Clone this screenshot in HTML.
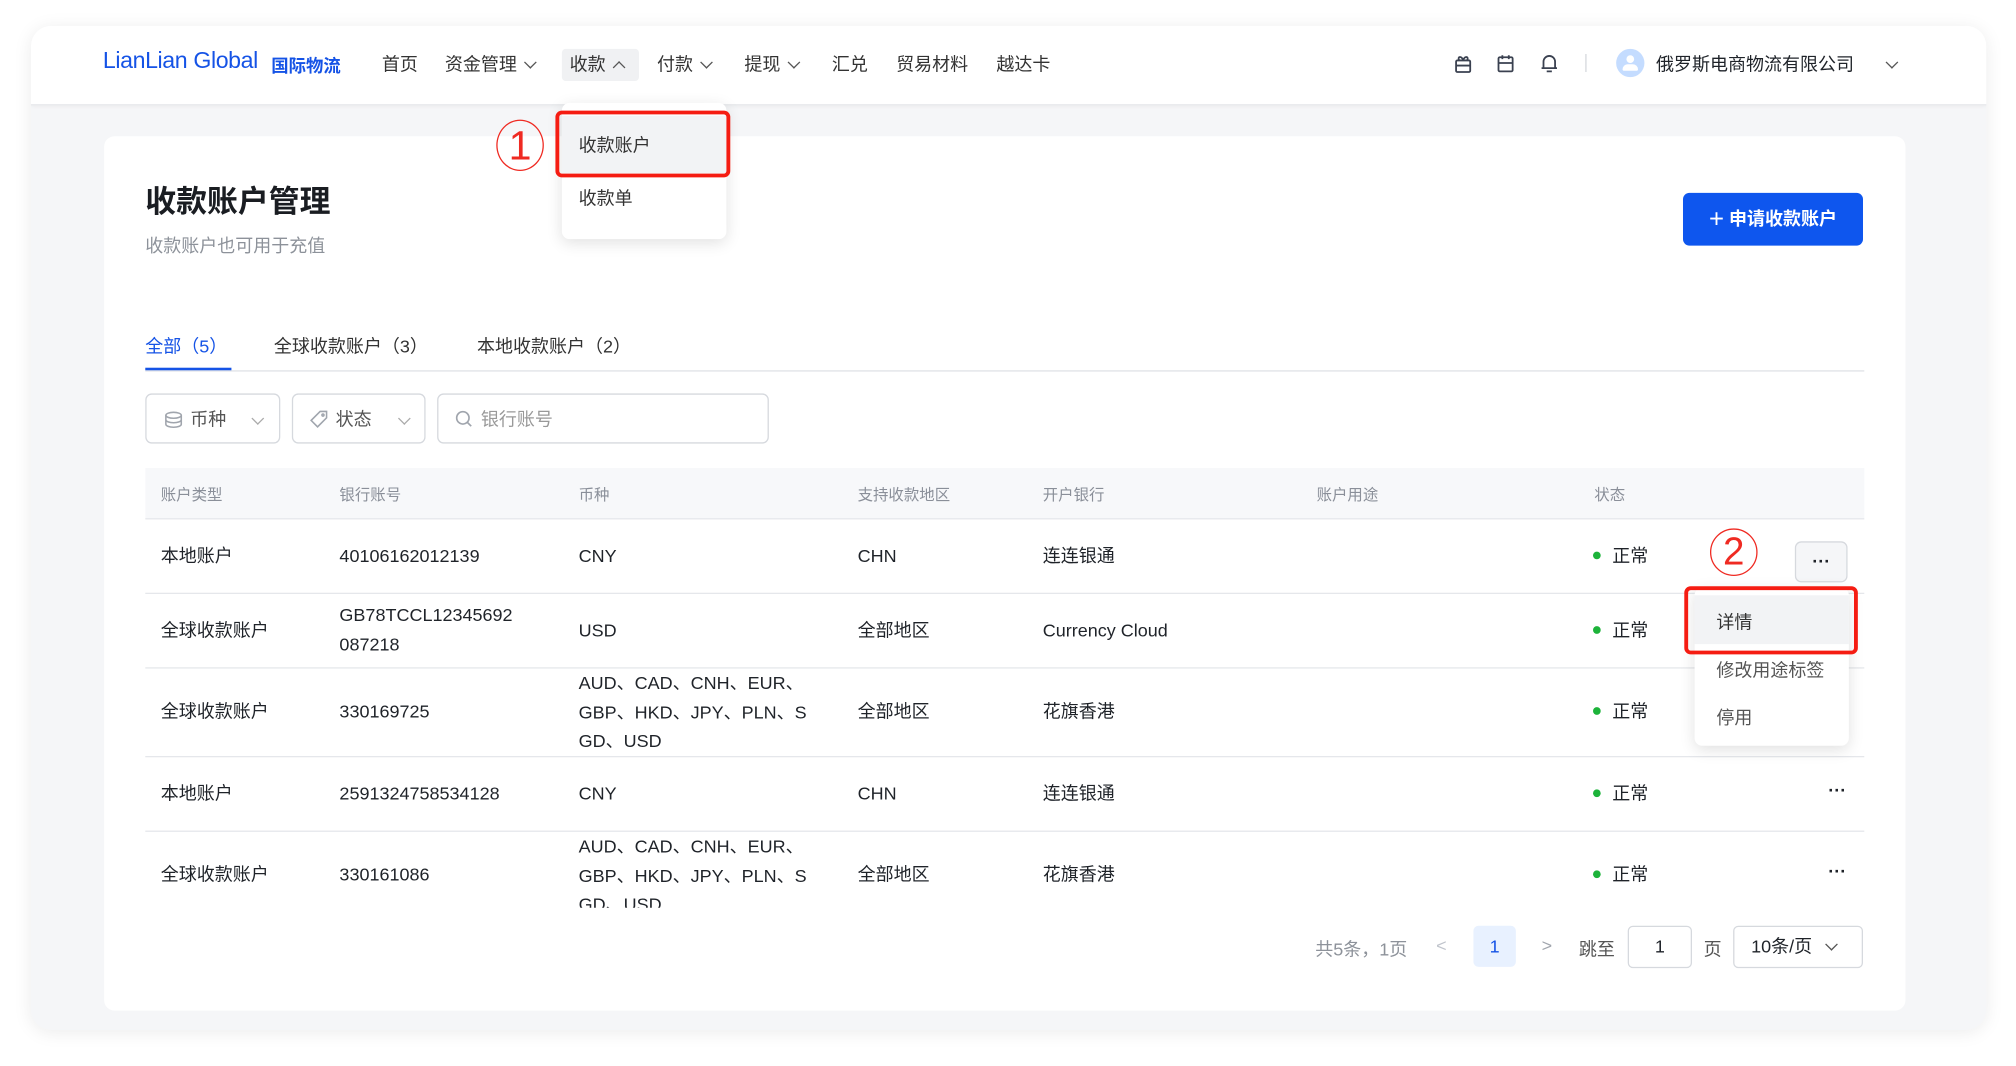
<!DOCTYPE html>
<html><head><meta charset="utf-8">
<style>
html,body{margin:0;padding:0;background:#fff;width:2016px;height:1065px;overflow:hidden}
body{font-family:"Liberation Sans","Noto Sans CJK SC",sans-serif;color:#1f2329}
#w{position:absolute;left:0;top:0;width:1568px;height:829px;transform:scale(1.285714);transform-origin:0 0}
.a{position:absolute;white-space:nowrap}
.win{position:absolute;left:24px;top:20px;width:1521px;height:781px;border-radius:16px;background:#f5f6f8;box-shadow:0 2px 14px rgba(0,0,0,.08);overflow:hidden}
.hdr{position:absolute;left:0;top:0;width:1521px;height:61px;background:#fff;border-bottom:1px solid #e6e8eb;box-shadow:0 1px 3px rgba(0,0,0,.05)}
.nav{font-size:14px;color:#333;top:41px;line-height:18px}
.chev{display:inline-block;width:6px;height:6px;border-right:1.2px solid #555;border-bottom:1.2px solid #555;transform:rotate(45deg);margin-left:7px;position:relative;top:-3px}
.chevu{transform:rotate(-135deg);top:1px}
.card{position:absolute;left:81px;top:106px;width:1401px;height:680px;background:#fff;border-radius:8px}
.f{position:absolute;top:306px;height:39px;border:1px solid #d6d9de;border-radius:5px;box-sizing:border-box;font-size:14px;color:#555;line-height:38px}
.th{font-size:12px;color:#8a8f99;top:376px}
.td{font-size:14px;color:#1f2329;line-height:22.5px}
.line{position:absolute;left:113px;width:1337px;height:1px;background:#e5e7eb}
.dot{position:absolute;width:6px;height:6px;border-radius:50%;background:#1db33a}
.dd{position:absolute;background:#fff;border-radius:6px;box-shadow:0 3px 12px rgba(0,0,0,.12)}
.red{position:absolute;border:3px solid #f51c12;border-radius:5px;box-sizing:border-box}
.circ{position:absolute;border:1.5px solid #ef2a22;border-radius:50%;color:#ef2a22;text-align:center;font-family:"Liberation Sans",sans-serif}
</style></head><body><div id="w">
<div class="win">
 <div class="hdr"></div>
</div>
<div class="a" style="left:80px;top:37px;font-size:18px;color:#1553e6;letter-spacing:-0.3px">LianLian Global</div>
<div class="a" style="left:211px;top:40px;font-size:13.5px;color:#1553e6;font-weight:bold">国际物流</div>
<div class="a nav" style="left:297px">首页</div>
<div class="a nav" style="left:346px">资金管理<span class="chev"></span></div>
<div class="a" style="left:437px;top:38px;width:60px;height:25px;background:#f0f1f3;border-radius:3px"></div>
<div class="a nav" style="left:443px">收款<span class="chev chevu"></span></div>
<div class="a nav" style="left:511px">付款<span class="chev"></span></div>
<div class="a nav" style="left:579px">提现<span class="chev"></span></div>
<div class="a nav" style="left:647px">汇兑</div>
<div class="a nav" style="left:697px">贸易材料</div>
<div class="a nav" style="left:775px">越达卡</div>
<svg class="a" style="left:1131px;top:42px" width="14" height="15" viewBox="0 0 14 15" fill="none" stroke="#3a4150" stroke-width="1.4"><rect x="1.5" y="5" width="11" height="9" rx="1"/><path d="M1.5 9h11M4 5c-2-3 2-4 3 0c1-4 5-3 3 0"/></svg>
<svg class="a" style="left:1164px;top:42px" width="14" height="15" viewBox="0 0 14 15" fill="none" stroke="#3a4150" stroke-width="1.4"><rect x="1.5" y="2.5" width="11" height="11" rx="1"/><path d="M1.5 7h11M4.5 1v3M9.5 1v3"/></svg>
<svg class="a" style="left:1198px;top:41px" width="14" height="16" viewBox="0 0 14 16" fill="none" stroke="#3a4150" stroke-width="1.4"><path d="M2.5 12V7a4.5 4.5 0 0 1 9 0v5zM1 12h12M5 14.5h4"/></svg>
<div class="a" style="left:1233px;top:42px;width:1px;height:14px;background:#d5d8dd"></div>
<div class="a" style="left:1257px;top:38px;width:22px;height:22px;border-radius:50%;background:#c4dcff"></div>
<div class="a" style="left:1265px;top:43px;width:6px;height:6px;border-radius:50%;background:#fff"></div>
<div class="a" style="left:1262px;top:50px;width:12px;height:5px;border-radius:4px 4px 1px 1px;background:#fff"></div>
<div class="a nav" style="left:1288px;color:#1f2329">俄罗斯电商物流有限公司</div>
<div class="a" style="left:1461px;top:42px"><span class="chev"></span></div>

<div class="card"></div>
<div class="a" style="left:113px;top:137px;font-size:24px;font-weight:bold;color:#1a1d22">收款账户管理</div>
<div class="a" style="left:113px;top:181px;font-size:14px;color:#8d929a">收款账户也可用于充值</div>
<div class="a" style="left:1309px;top:150px;width:140px;height:41px;border-radius:5px;background:#0e56ee;color:#fff;font-size:14px;font-weight:bold;line-height:41px;text-align:center"><span style="font-size:20px;font-weight:normal;vertical-align:-2px">+</span> 申请收款账户</div>

<div class="a" style="left:113px;top:259px;font-size:14px;color:#1553e6">全部（5）</div>
<div class="a" style="left:213px;top:259px;font-size:14px;color:#333">全球收款账户（3）</div>
<div class="a" style="left:371px;top:259px;font-size:14px;color:#333">本地收款账户（2）</div>
<div class="line" style="top:288px;background:#dfe2e6"></div>
<div class="a" style="left:113px;top:286px;width:67px;height:2px;background:#1553e6"></div>

<div class="f" style="left:113px;width:105px"><svg style="position:absolute;left:14px;top:13px" width="14" height="13" viewBox="0 0 14 13" fill="none" stroke="#a0a5ad" stroke-width="1.2"><ellipse cx="7" cy="3" rx="6" ry="2.3"/><path d="M1 3v7c0 1.3 2.7 2.3 6 2.3s6-1 6-2.3V3M1 6.5c0 1.3 2.7 2.3 6 2.3s6-1 6-2.3"/></svg><span style="position:absolute;left:34px">币种</span><span class="chev" style="position:absolute;left:76px;top:15px;border-color:#aaa"></span></div>
<div class="f" style="left:227px;width:104px"><svg style="position:absolute;left:13px;top:12px" width="14" height="14" viewBox="0 0 14 14" fill="none" stroke="#a0a5ad" stroke-width="1.2"><path d="M8 1h5v5l-7 7-5-5z"/><circle cx="10.2" cy="3.8" r=".8"/></svg><span style="position:absolute;left:33px">状态</span><span class="chev" style="position:absolute;left:76px;top:15px;border-color:#aaa"></span></div>
<div class="f" style="left:340px;width:258px"><svg style="position:absolute;left:13px;top:12px" width="14" height="14" viewBox="0 0 14 14" fill="none" stroke="#a0a5ad" stroke-width="1.3"><circle cx="6" cy="6" r="4.8"/><path d="M9.5 9.5l3 3"/></svg><span style="position:absolute;left:33px;color:#999">银行账号</span></div>

<div class="a" style="left:113px;top:364px;width:1337px;height:39px;background:#f7f8fa"></div>
<div class="a th" style="left:125px">账户类型</div>
<div class="a th" style="left:264px">银行账号</div>
<div class="a th" style="left:450px">币种</div>
<div class="a th" style="left:667px">支持收款地区</div>
<div class="a th" style="left:811px">开户银行</div>
<div class="a th" style="left:1024px">账户用途</div>
<div class="a th" style="left:1240px">状态</div>
<div class="line" style="top:403px"></div>
<div class="line" style="top:461px"></div>
<div class="line" style="top:519px"></div>
<div class="line" style="top:588px"></div>
<div class="line" style="top:646px"></div>

<div style="position:absolute;left:0;top:404px;width:1568px;height:302px;overflow:hidden">
<div style="position:absolute;left:0;top:-404px;width:1568px">
 <div class="a td" style="left:125px;top:421px">本地账户</div>
 <div class="a td" style="left:264px;top:421px">40106162012139</div>
 <div class="a td" style="left:450px;top:421px">CNY</div>
 <div class="a td" style="left:667px;top:421px">CHN</div>
 <div class="a td" style="left:811px;top:421px">连连银通</div>

 <div class="a td" style="left:125px;top:479px">全球收款账户</div>
 <div class="a td" style="left:264px;top:467px">GB78TCCL12345692<br>087218</div>
 <div class="a td" style="left:450px;top:479px">USD</div>
 <div class="a td" style="left:667px;top:479px">全部地区</div>
 <div class="a td" style="left:811px;top:479px">Currency Cloud</div>

 <div class="a td" style="left:125px;top:542px">全球收款账户</div>
 <div class="a td" style="left:264px;top:542px">330169725</div>
 <div class="a td" style="left:450px;top:520px">AUD、CAD、CNH、EUR、<br>GBP、HKD、JPY、PLN、S<br>GD、USD</div>
 <div class="a td" style="left:667px;top:542px">全部地区</div>
 <div class="a td" style="left:811px;top:542px">花旗香港</div>

 <div class="a td" style="left:125px;top:606px">本地账户</div>
 <div class="a td" style="left:264px;top:606px">2591324758534128</div>
 <div class="a td" style="left:450px;top:606px">CNY</div>
 <div class="a td" style="left:667px;top:606px">CHN</div>
 <div class="a td" style="left:811px;top:606px">连连银通</div>

 <div class="a td" style="left:125px;top:669px">全球收款账户</div>
 <div class="a td" style="left:264px;top:669px">330161086</div>
 <div class="a td" style="left:450px;top:647px">AUD、CAD、CNH、EUR、<br>GBP、HKD、JPY、PLN、S<br>GD、USD</div>
 <div class="a td" style="left:667px;top:669px">全部地区</div>
 <div class="a td" style="left:811px;top:669px">花旗香港</div>

 <div class="dot" style="left:1239px;top:429px"></div><div class="a td" style="left:1254px;top:421px">正常</div>
 <div class="dot" style="left:1239px;top:487px"></div><div class="a td" style="left:1254px;top:479px">正常</div>
 <div class="dot" style="left:1239px;top:550px"></div><div class="a td" style="left:1254px;top:542px">正常</div>
 <div class="dot" style="left:1239px;top:614px"></div><div class="a td" style="left:1254px;top:606px">正常</div>
 <div class="dot" style="left:1239px;top:677px"></div><div class="a td" style="left:1254px;top:669px">正常</div>
 <div class="a" style="left:1422px;top:606px;font-size:14px;font-weight:bold">···</div>
 <div class="a" style="left:1422px;top:669px;font-size:14px;font-weight:bold">···</div>
</div></div>

<div class="a" style="left:1396px;top:421px;width:41px;height:32px;border:1px solid #d6d9de;border-radius:5px;background:#f5f6f8;box-sizing:border-box;text-align:center;font-size:14px;font-weight:bold;line-height:28px">···</div>

<div class="a" style="left:1023px;top:728px;font-size:14px;color:#8d929a">共5条，1页</div>
<div class="a" style="left:1117px;top:727px;font-size:14px;color:#c0c4cc">&lt;</div>
<div class="a" style="left:1146px;top:720px;width:33px;height:32px;background:#e8f1ff;border-radius:4px;color:#1553e6;font-size:14px;text-align:center;line-height:32px">1</div>
<div class="a" style="left:1199px;top:727px;font-size:14px;color:#a0a5ad">&gt;</div>
<div class="a" style="left:1228px;top:728px;font-size:14px;color:#555">跳至</div>
<div class="a" style="left:1266px;top:720px;width:50px;height:33px;border:1px solid #d6d9de;border-radius:4px;box-sizing:border-box;text-align:center;font-size:14px;line-height:31px">1</div>
<div class="a" style="left:1325px;top:728px;font-size:14px;color:#555">页</div>
<div class="a" style="left:1348px;top:720px;width:101px;height:33px;border:1px solid #d6d9de;border-radius:4px;box-sizing:border-box;font-size:14px;line-height:31px;padding-left:13px">10条/页<span class="chev" style="margin-left:12px"></span></div>

<div class="dd" style="left:437px;top:80px;width:128px;height:106px"></div>
<div class="a" style="left:437px;top:90px;width:128px;height:45px;background:#f2f3f5"></div>
<div class="a" style="left:450px;top:103px;font-size:14px;color:#333">收款账户</div>
<div class="a" style="left:450px;top:144px;font-size:14px;color:#333">收款单</div>
<div class="red" style="left:432px;top:86px;width:136px;height:52px"></div>
<div class="circ" style="left:386px;top:93px;width:35px;height:38px;font-size:32px;line-height:38px">1</div>

<div class="dd" style="left:1318px;top:457px;width:120px;height:123px"></div>
<div class="a" style="left:1318px;top:463px;width:120px;height:38px;background:#f2f3f5"></div>
<div class="a" style="left:1335px;top:474px;font-size:14px;color:#333">详情</div>
<div class="a" style="left:1335px;top:511px;font-size:14px;color:#555">修改用途标签</div>
<div class="a" style="left:1335px;top:548px;font-size:14px;color:#555">停用</div>
<div class="red" style="left:1310px;top:456px;width:135px;height:53px"></div>
<div class="circ" style="left:1330px;top:411px;width:35px;height:35px;font-size:30px;line-height:35px">2</div>
</div></body></html>
